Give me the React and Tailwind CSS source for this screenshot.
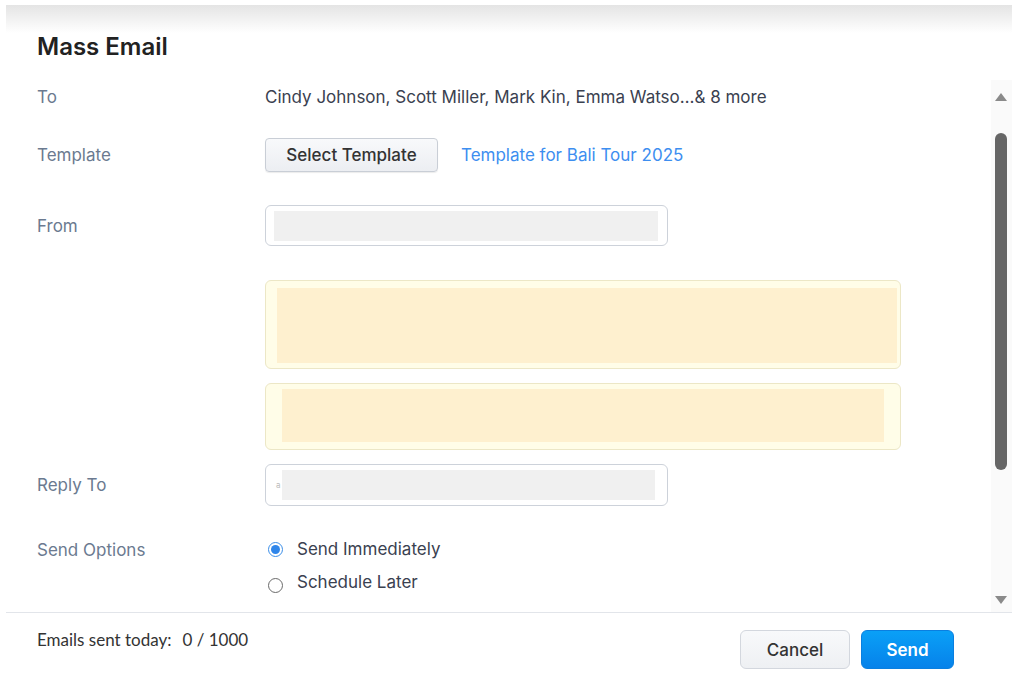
const LABEL = 'text-[17px] text-[#6b7a90]'

function Row({ label, className = '', children }) {
  return (
    <div className={`flex items-center ${className}`}>
      <div className={`w-[228px] shrink-0 pt-[2px] ${LABEL}`}>{label}</div>
      <div className="flex min-w-0 flex-1 items-center">{children}</div>
    </div>
  )
}

function Radio({ checked, label, className = '' }) {
  return (
    <div className={`flex h-[24px] items-center ${className}`}>
      {checked ? (
        <span className="ml-[3px] flex h-[15px] w-[15px] items-center justify-center rounded-full border border-[#3b8ee8] bg-white">
          <span className="h-[9px] w-[9px] rounded-full bg-[#2f86ea]" />
        </span>
      ) : (
        <span className="ml-[3px] mt-[7px] h-[15px] w-[15px] rounded-full border border-[#6a6a6a] bg-white" />
      )}
      <span className="ml-[14px] pt-[1px] text-[17px] text-[#3a4150]">{label}</span>
    </div>
  )
}

function Scrollbar() {
  return (
    <div className="flex w-[21px] shrink-0 flex-col items-center bg-[#fafafa] pr-[1px]">
      <div className="mt-[13px] h-0 w-0 border-x-[6px] border-b-[8px] border-x-transparent border-b-[#8a8a8a]" />
      <div className="mt-[32px] h-[337px] w-[12px] rounded-full bg-[#666]" />
      <div className="flex-1" />
      <div className="mb-[8px] h-0 w-0 border-x-[6px] border-t-[8px] border-x-transparent border-t-[#8a8a8a]" />
    </div>
  )
}

export default function App() {
  return (
    <div className="h-[696px] w-[1024px] bg-white pl-[6px] pt-[5px] font-[Inter,'Liberation_Sans',sans-serif]">
      <div className="flex w-[1006px] flex-col">
        <div className="h-[75px] bg-[linear-gradient(to_bottom,#e4e4e4,#ffffff_28px)] pl-[31px] pt-[26px]">
          <h1 className="text-[24px] font-semibold leading-[32px] text-[#222]">Mass Email</h1>
        </div>

        <div className="flex h-[532px]">
          <div className="flex-1 pl-[31px]">
            <Row label="To" className="h-[34px]">
              <span className="pt-[2px] text-[17px] text-[#3a4150]">
                Cindy Johnson, Scott Miller, Mark Kin, Emma Watso…&amp; 8 more
              </span>
            </Row>

            <Row label="Template" className="mt-[24px] h-[34px]">
              <button className="h-[34px] w-[173px] rounded-[4px] border border-[#c9ced6] bg-[linear-gradient(to_bottom,#f8f9fb,#eceef2)] pt-[1px] text-[17px] font-medium text-[#333] shadow-[0_1px_1px_rgba(0,0,0,0.08)]">
                Select Template
              </button>
              <span className="ml-[23px] pt-[2px] text-[17px] text-[#3d8ef0]">Template for Bali Tour 2025</span>
            </Row>

            <Row label="From" className="mt-[33px] h-[41px]">
              <div className="flex h-[41px] w-[403px] items-center rounded-[6px] border border-[#cdd2da] pl-[8px] pr-[9px]">
                <div className="h-[30px] w-full bg-[#f0f0f0]" />
              </div>
            </Row>

            <div className="ml-[228px] mt-[34px] h-[89px] w-[636px] rounded-[6px] border border-[#ece7c6] bg-[#fffde8] pb-[5px] pl-[11px] pr-[3px] pt-[7px]">
              <div className="h-full w-full bg-[#fef0cf]" />
            </div>

            <div className="ml-[228px] mt-[14px] h-[67px] w-[636px] rounded-[6px] border border-[#ece7c6] bg-[#fffde8] pb-[7px] pl-[16px] pr-[16px] pt-[5px]">
              <div className="h-full w-full bg-[#fef0cf]" />
            </div>

            <Row label="Reply To" className="mt-[14px] h-[42px]">
              <div className="flex h-[42px] w-[403px] items-center rounded-[6px] border border-[#cdd2da] pl-[10px] pr-[12px]">
                <span className="mr-[1px] text-[8px] leading-none text-[#bbb]">a</span>
                <div className="h-[30px] flex-1 bg-[#f0f0f0]" />
              </div>
            </Row>

            <div className="mt-[31px] flex items-start">
              <div className={`w-[228px] shrink-0 pt-[1px] leading-[24px] ${LABEL}`}>Send Options</div>
              <div>
                <Radio checked label="Send Immediately" />
                <Radio label="Schedule Later" className="mt-[9px]" />
              </div>
            </div>
          </div>
          <Scrollbar />
        </div>

        <div className="flex h-[79px] items-start justify-between border-t border-[#e2e5ea] pl-[31px] pr-[58px]">
          <div className="mt-[16px] flex font-[Lato,'Liberation_Sans',sans-serif] text-[17px] leading-[22px] text-[#333]">
            <span>Emails sent today:</span>
            <span className="ml-[11px]">0 / 1000</span>
          </div>
          <div className="mt-[17px] flex gap-[11px]">
            <button className="h-[39px] w-[110px] rounded-[6px] border border-[#d3d7de] bg-[linear-gradient(to_bottom,#f8f9fb,#eef0f3)] pt-[2px] text-[17px] font-medium text-[#333]">
              Cancel
            </button>
            <button className="h-[39px] w-[93px] rounded-[6px] border border-[#0a7fe0] bg-[linear-gradient(to_bottom,#0aa0f7,#0682ea)] pt-[2px] text-[17px] font-semibold text-white">
              Send
            </button>
          </div>
        </div>
      </div>
    </div>
  )
}
